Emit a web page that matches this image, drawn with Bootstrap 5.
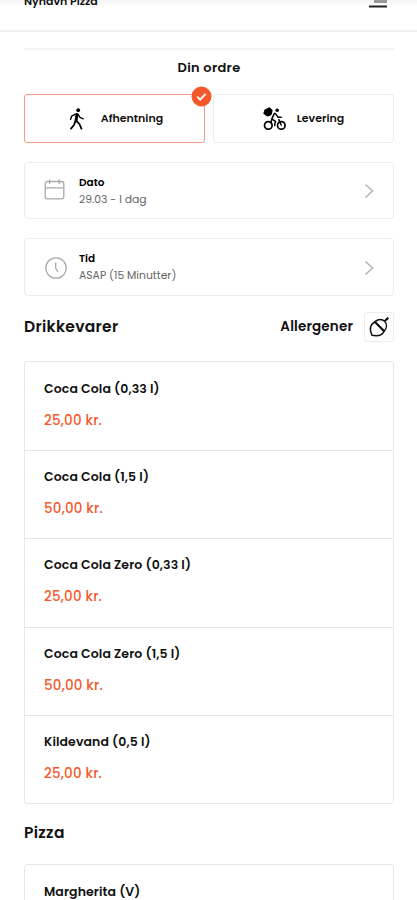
<!DOCTYPE html>
<html lang="da">
<head>
<meta charset="utf-8">
<meta name="viewport" content="width=device-width, initial-scale=1">
<title>Nyhavn Pizza</title>
<link href="https://cdn.jsdelivr.net/npm/bootstrap@5.3.0/dist/css/bootstrap.min.css" rel="stylesheet">
<style>
:root{--line:#ececec;--brand:#f4592b}
html{overflow:hidden}
body{font-family:Poppins,Inter,sans-serif;font-size:12px;color:#111;height:900px;overflow:hidden;background:#fff}
.topbar{height:32px;border-bottom:2px solid #f0f0f0;padding:0 30px 0 24px;background:linear-gradient(#f6f6f6,#fff 7px)}
.brand-name{font-size:11px;line-height:16px;margin-top:-7px}
.menu-icon{width:18px;height:8px}
.page{padding:16px 23px 0 24px;height:868px;overflow:hidden}
.rule{height:2px;background:#f3f3f3}
.order-title{font-size:13px;line-height:20px;margin:8px 0 16px;letter-spacing:.3px}
.choices{gap:8px}
.choice{height:49px;border:1px solid var(--line);border-radius:3px;font-size:11px;font-weight:600}
.choice.active{border-color:#f79a88}
.pick-label{margin-left:15px}
.deliver-label{margin-left:10px}
.check{top:-9px;right:-8px;width:21px;height:21px}
.picker{height:57px;border:1px solid var(--line);border-radius:4px;padding:1px 18px 0;margin-top:19px}
.picker + .picker{height:58px}
.picker .caption{font-size:10.5px;font-weight:600;line-height:16px;color:#000}
.picker .val{font-size:10.8px;line-height:17px;color:#666}
.picker .kind{width:24px;height:24px;margin-right:12px}
.section-title{font-size:15.5px;font-weight:600;line-height:20px;letter-spacing:.3px}
.allergen-row{margin-top:16px}
.allergen{font-size:13.5px;font-weight:600;letter-spacing:.15px}
.allergen-btn{width:30px;height:30px;border:1px solid var(--line);border-radius:3px;margin-left:11px}
.menu-list{border:1px solid #e8e8e8;border-radius:3px}
.drinks{margin-top:19px}
.dish{height:88.2px;padding:17px 19px 0}
.dish+.dish{border-top:1px solid #e6e6e6;padding-top:16px}
.dish-name{font-size:12.5px;font-weight:600;line-height:20px;letter-spacing:.1px}
.price{font-size:13.5px;font-weight:500;line-height:20px;margin-top:12px;letter-spacing:.2px;color:var(--brand)}
.pizza-title{margin:19px 0 21px}
</style>
</head>
<body>
<header class="topbar d-flex justify-content-between align-items-start">
  <div class="brand-name fw-semibold">Nyhavn Pizza</div>
  <svg class="menu-icon" viewBox="0 0 18 8"><path d="M5 0H18V3H5z" fill="#999"/><path d="M0 5.5H18V7.5H0z" fill="#222"/></svg>
</header>
<main class="page">
  <div class="rule"></div>
  <h1 class="order-title fw-semibold text-center">Din ordre</h1>
  <div class="choices d-flex">
    <div class="choice active col position-relative d-flex align-items-center justify-content-center">
      <svg width="20" height="24" viewBox="0 0 20 24" fill="none" stroke="#000" stroke-linejoin="round" stroke-linecap="round"><circle cx="12.2" cy="3.2" r="1.9" fill="#000" stroke="none"/><path d="M11 7.4 10 14" stroke-width="3"/><path d="M9.6 7.2 5.6 9.2 4.6 12.4M12.2 7.7 14 10.4 17.2 11.8" stroke-width="1.4"/><path d="M9.2 14.5 8 18 5 21.6M10.4 13.8 13.4 17 15.4 21.6" stroke-width="1.8"/></svg>
      <span class="pick-label">Afhentning</span>
      <svg class="check position-absolute" viewBox="0 0 21 21"><circle cx="10.5" cy="10.5" r="10" fill="#f4592b"/><path d="m6.2 10.6 3 3 5.4-5.7" fill="none" stroke="#fff" stroke-width="2"/></svg>
    </div>
    <div class="choice col d-flex align-items-center justify-content-center">
      <svg width="24" height="24" viewBox="0 0 24 24" fill="none" stroke="#000" stroke-width="1.7" stroke-linejoin="round" stroke-linecap="round"><path d="M2.2 3.2 6.4 1.2 8.8 3.6 7.8 7.4 4.4 8.6 1.2 6.4z" fill="#000"/><circle cx="14.2" cy="3.2" r="1.8" fill="#000" stroke="none"/><circle cx="5.3" cy="18.4" r="3.8"/><circle cx="18.3" cy="18.4" r="3.8"/><path d="M11.4 6.4 8.8 11.8 12.4 14.4 11.6 18.6M12.4 6.6 15.2 10.2H18.2M15.8 12.6 18.2 18M8.8 11.8 8 16" stroke-width="1.5"/></svg>
      <span class="deliver-label">Levering</span>
    </div>
  </div>
  <div class="picker d-flex align-items-center">
    <svg class="kind" viewBox="0 0 24 24" fill="none" stroke="#aaa" stroke-width="1.3"><rect x="2.2" y="2.5" width="18.6" height="17.3" rx="2.2"/><path d="M2.2 8.8H20.8M6.6 .5V5M16.2 .5V5"/></svg>
    <div class="flex-grow-1"><div class="caption">Dato</div><div class="val">29.03 - I dag</div></div>
    <svg width="12" height="16" viewBox="0 0 12 16" fill="none" stroke="#b8b8b8" stroke-width="1.7"><path d="m2.5 1.5 7 6.5-7 6.5"/></svg>
  </div>
  <div class="picker d-flex align-items-center">
    <svg class="kind" viewBox="0 0 24 24" fill="none" stroke="#aaa" stroke-width="1.3"><circle cx="13" cy="12" r="10.2"/><path d="M12.7 6.6V12.4L15 15.8"/></svg>
    <div class="flex-grow-1"><div class="caption">Tid</div><div class="val">ASAP (15 Minutter)</div></div>
    <svg width="12" height="16" viewBox="0 0 12 16" fill="none" stroke="#b8b8b8" stroke-width="1.7"><path d="m2.5 1.5 7 6.5-7 6.5"/></svg>
  </div>
  <div class="allergen-row d-flex align-items-center">
    <h2 class="section-title mb-0 me-auto">Drikkevarer</h2>
    <span class="allergen">Allergener</span>
    <div class="allergen-btn d-flex align-items-center justify-content-center">
      <svg width="22" height="22" viewBox="0 0 22 22" fill="none" stroke="#111" stroke-width="1.5" stroke-linecap="round" stroke-linejoin="round"><path d="M7 6C3 8 1.8 11.5 2.6 15.2L4 19.2 8.2 19.8C11.8 19.8 14.8 18.2 16 15"/><path d="M7 6 16 15" stroke-width="2.3"/><path d="M7.4 5.4C10.5 2.6 14.4 3 16.6 5.2 18.8 7.6 19.2 11.4 16.8 14.4M16.8 5 19.6 2.2"/><path d="M17.8 4 19.6 2.4" stroke-width="2.2"/></svg>
    </div>
  </div>
  <div class="menu-list drinks">
    <div class="dish"><div class="dish-name">Coca Cola (0,33 l)</div><div class="price">25,00 kr.</div></div>
    <div class="dish"><div class="dish-name">Coca Cola (1,5 l)</div><div class="price">50,00 kr.</div></div>
    <div class="dish"><div class="dish-name">Coca Cola Zero (0,33 l)</div><div class="price">25,00 kr.</div></div>
    <div class="dish"><div class="dish-name">Coca Cola Zero (1,5 l)</div><div class="price">50,00 kr.</div></div>
    <div class="dish"><div class="dish-name">Kildevand (0,5 l)</div><div class="price">25,00 kr.</div></div>
  </div>
  <h2 class="section-title pizza-title">Pizza</h2>
  <div class="menu-list">
    <div class="dish"><div class="dish-name">Margherita (V)</div></div>
  </div>
</main>
<script src="https://cdn.jsdelivr.net/npm/bootstrap@5.3.0/dist/js/bootstrap.bundle.min.js"></script>
</body>
</html>
